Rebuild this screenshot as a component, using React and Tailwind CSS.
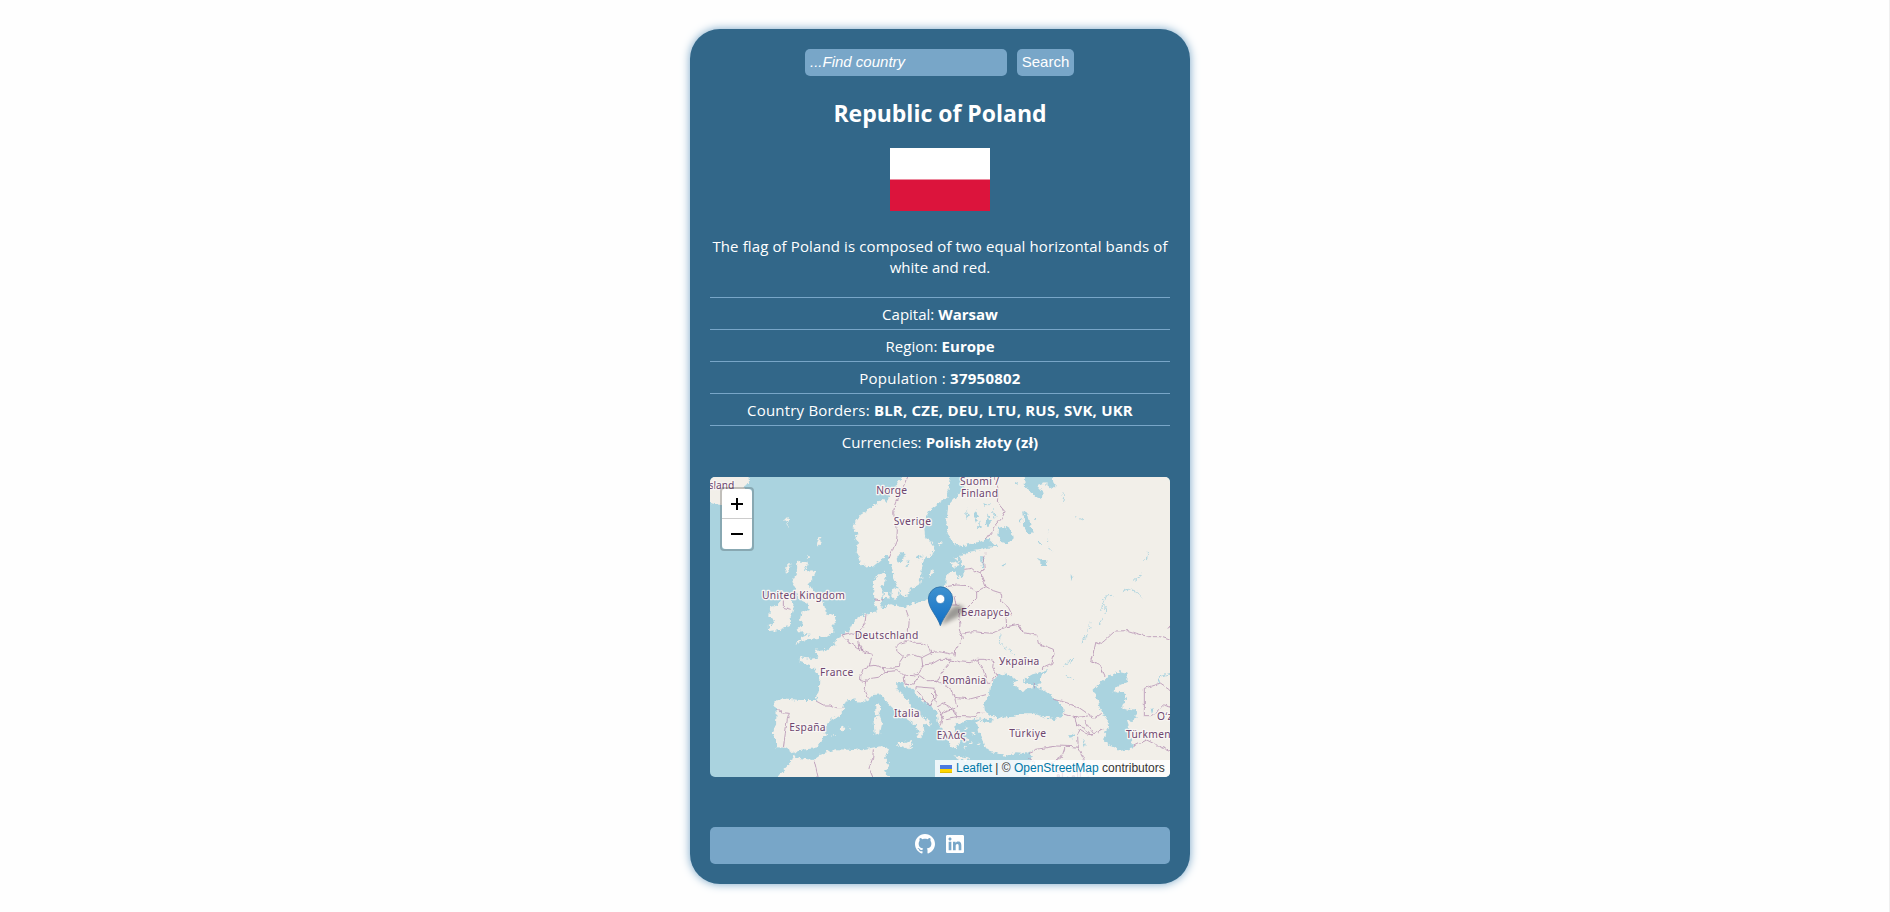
import React from "react";
import { RiGithubFill, RiLinkedinBoxFill } from "react-icons/ri";

const facts = [
  { label: "Capital:", value: "Warsaw", track: "tracking-[0px]" },
  { label: "Region:", value: "Europe", track: "tracking-[0.05px]" },
  { label: "Population :", value: "37950802", track: "tracking-[0.24px]" },
  { label: "Country Borders:", value: "BLR, CZE, DEU, LTU, RUS, SVK, UKR", track: "tracking-[0.21px]" },
  { label: "Currencies:", value: "Polish złoty (zł)", track: "tracking-[0.08px]" },
];

const land = [
  // Iceland
  "M20,10 L145,10 147,40 130,50 138,58 112,70 100,80 85,98 65,105 45,103 20,95Z",
  // Scandinavia
  "M612,10 L600,30 572,70 560,92 545,90 520,106 500,124 482,134 466,154 461,172 472,190 463,205 474,218 470,245 478,275 500,292 518,290 540,272 556,256 566,262 568,280 578,300 580,320 592,345 600,365 608,379 627,376 630,354 655,347 663,320 666,290 672,266 696,254 704,232 690,212 672,200 670,170 678,145 690,120 715,100 738,84 745,60 755,10Z",
  // Continental Europe and western Asia
  "M800,10 L795,50 770,78 746,104 739,150 743,190 755,212 780,230 800,224 840,215 865,205 878,216 890,230 865,233 840,240 800,247 780,258 784,282 794,290 793,318 782,325 765,306 748,305 737,330 735,350 730,378 712,386 690,386 665,394 640,401 615,412 597,410 575,402 562,408 548,416 540,402 546,392 548,368 544,350 557,330 554,305 535,318 519,332 518,350 524,385 528,410 530,428 510,428 490,434 470,446 460,455 450,478 436,490 405,513 402,526 380,540 360,542 350,535 346,543 356,562 335,567 300,562 299,575 325,584 345,600 358,620 357,660 348,690 300,690 245,685 222,698 230,722 228,760 217,792 228,805 228,832 255,833 270,842 283,853 297,840 345,835 362,815 378,795 372,778 392,750 428,732 430,712 437,692 465,688 480,698 505,688 522,672 545,670 558,695 585,720 620,745 645,763 656,785 650,800 660,806 672,790 668,770 675,760 690,770 692,757 660,735 652,722 635,715 622,690 608,675 590,655 588,640 608,636 616,654 624,645 642,665 665,690 695,712 710,725 713,757 722,775 738,800 752,830 768,838 772,820 780,825 775,800 764,785 768,760 790,757 820,748 845,745 830,757 838,785 850,810 858,838 890,848 915,858 945,850 975,852 995,842 990,870 982,930 1420,930 1420,10Z",
  // North Africa
  "M225,930 L245,905 265,885 283,858 300,865 340,870 370,850 410,838 460,840 500,836 545,828 567,838 555,868 570,885 552,905 580,930Z",
  // Great Britain
  "M292,276 L325,273 320,292 314,302 347,306 337,328 322,345 345,362 360,382 372,402 378,430 404,436 407,456 395,470 404,484 380,500 350,505 320,508 286,525 306,502 330,492 306,487 290,482 312,462 300,448 304,428 326,420 322,398 303,390 290,375 286,350 277,335 290,312Z",
  // Ireland
  "M250,380 L275,388 283,408 272,440 273,465 240,480 208,483 203,470 225,455 208,440 210,412 235,405Z",
  "M256,295 L272,280 268,298 258,312Z M256,146 L270,145 262,155 264,178Z M360,200 L362,218 350,230 354,210Z M322,255 L328,262 320,268Z",
  // Danish islands, Gotland, Öland, Estonian islands, Åland
  "M551,368 L566,370 566,386 552,382Z M576,358 L590,352 598,368 588,390 574,378Z M693,298 L702,300 695,318 688,324Z M668,318 L663,345 660,342Z M752,278 L775,274 778,286 758,292Z M760,262 L772,262 770,270Z M712,215 L730,218 718,225Z",
  // Mediterranean islands
  "M590,815 L614,816 637,810 632,828 637,840 615,833 592,824Z M520,745 L540,738 546,762 540,790 524,794Z M526,706 L539,700 541,720 534,739 526,725Z M416,776 L432,770 436,778 424,786Z M444,770 L452,772 448,776Z M394,792 L402,792 398,797Z M760,856 L800,862 812,868 780,870Z",
  // Aegean islands
  "M795,775 L806,772 802,780Z M818,785 L826,788 818,794Z M790,800 L806,806 800,812Z M808,820 L818,816 816,826Z M830,822 L842,820 836,828Z M790,830 L798,832 794,838Z",
];

const water = [
  // White Sea
  "M970,10 L975,50 990,62 1010,82 1026,88 1028,66 1012,48 1035,40 1055,56 1067,45 1055,10Z",
  // Ladoga, Onega and smaller lakes
  "M895,175 L912,168 935,183 938,208 924,223 902,214 892,195Z",
  "M966,124 L985,135 990,160 998,188 985,194 972,170 972,150Z",
  "M843,262 L850,262 852,290 856,295 846,294Z M1014,218 L1026,216 1026,224 1016,225Z M905,281 L918,280 916,288 907,289Z M1012,264 L1040,275 1042,288 1028,288Z M1045,232 L1057,244 1050,240Z",
  "M590,266 L600,250 617,252 608,270 594,278Z M618,288 L626,268 623,292Z M652,258 L668,256 656,268Z",
  "M826,120 L832,135 828,160 822,140Z M850,100 L868,104 852,110Z M862,130 L870,150 866,172 856,160 862,150Z M880,110 L886,140 880,150Z M836,150 L842,170 834,180Z M800,118 L806,140 798,150Z",
  "M1043,178 L1048,180 1044,188Z M1042,205 L1047,214 1041,212Z M1112,312 L1118,322 1113,334Z M950,30 L955,42 948,38Z M958,145 L968,150 960,158Z M1005,140 L1010,148 1004,150Z",
  // Black Sea and Sea of Azov
  "M895,615 L915,611 940,622 952,632 936,640 952,654 970,664 990,653 1003,651 990,642 972,640 973,630 990,615 1045,600 1024,620 1020,640 1008,647 1024,655 1050,675 1075,695 1091,720 1086,740 1060,747 1030,741 1000,730 970,730 940,740 905,743 870,738 855,726 852,700 866,678 870,650 878,634Z",
  "M842,751 L855,746 885,748 870,758 850,758Z",
  // Caspian Sea
  "M1180,660 L1208,632 1235,615 1260,603 1283,608 1282,635 1255,647 1238,662 1250,668 1270,665 1278,685 1266,712 1282,722 1290,716 1305,720 1312,740 1296,754 1280,750 1290,780 1300,835 1265,842 1235,828 1212,812 1216,785 1230,760 1215,740 1200,715 1190,685Z",
  // Van, Urmia, Aral remnants
  "M1102,798 L1122,790 1116,805Z M1145,808 L1157,822 1156,832Z M1352,718 L1362,714 1356,732Z M1372,630 L1382,618 1376,645Z",
];

const rivers = [
  "M1205,425 L1208,400 1216,378 1240,376 M1205,400 L1218,412 1215,430 M1205,445 L1198,465",
  "M1270,362 L1285,358 1310,368 1330,385 M1300,332 L1320,320 1326,308 M1330,272 L1345,262 1345,246",
  "M900,490 L898,520 925,540 945,555 M1092,590 L1118,565 1112,580 M1100,615 L1122,630 M1146,520 L1162,490 1170,455 M1080,70 L1095,75 1090,100 M1125,140 L1150,150 M1380,620 L1410,610",
];

const borders = [
  "M624,15 L612,45 596,75 584,105 581,130 586,152 592,180 590,210 578,240 567,265",
  "M885,15 L895,60 892,98 915,125 905,145 885,170 858,208",
  "M858,248 L850,270 853,295 843,312 858,350 880,362 905,370 905,395 925,412 935,432 918,440 920,470 955,463 965,480 972,490",
  "M793,298 L815,295 828,306 843,312 M738,350 L770,345 805,347 830,366 858,350 M830,366 L830,385 815,400 800,415 780,420 776,445 780,465 778,480 783,490 820,485 875,490 910,475 920,470",
  "M735,405 L778,405 M762,378 L768,405 M783,490 L787,505 768,535 765,560",
  "M955,465 L970,488 1010,495 1015,520 1060,538 1062,555 1055,580 1032,590 1030,600",
  "M755,570 L775,575 810,578 830,568 855,568 880,575 878,595 890,615 870,640 862,640 850,600 830,570",
  "M755,570 L730,600 715,630 695,632 680,632 658,616 M760,670 L765,682 810,687 858,674 M705,630 L740,650 762,668 M765,684 L770,710 758,720 770,740 800,740 825,742 832,728 855,728",
  "M728,725 L750,718 768,725 767,743 740,749 728,738Z M690,672 L708,690 710,712 720,725 728,740 720,770 M710,712 L730,700 745,708 760,718 M730,700 L738,695",
  "M498,432 L495,460 480,480 475,500 478,525 487,545 M425,495 L450,520 478,540 487,545 517,553 508,588 490,595 482,618 482,632 497,635 M425,495 L455,488 475,492",
  "M475,525 L485,525 485,541 476,541Z M497,635 L508,626 535,622 555,605 545,592 525,586 508,588 M497,635 L493,655 505,685",
  "M545,592 L575,595 598,592 600,575 610,560 592,545 588,530 598,520 628,512 650,520 665,520 690,532 695,548 665,563 640,555 610,560",
  "M555,605 L590,602 612,615 640,617 657,612 668,585 665,563 M618,422 L628,450 625,480 628,512 M695,548 L720,545 750,552 765,552 M668,585 L695,582 720,568 755,568",
  "M612,615 L615,640 640,642 657,618 M648,650 L705,655 708,680 696,698 690,708 668,682 648,658Z",
  "M228,720 L240,720 242,728 268,730 262,748 256,790 250,832 M348,693 L370,705 390,705 410,713 430,713",
  "M343,872 L355,925 M520,838 L518,865 507,895 520,925 M522,387 L548,390 M250,388 L250,412 272,418",
  "M1060,688 L1100,698 1140,715 1180,742 M1090,732 L1125,743 1160,738 1185,745 1205,730 M1125,743 L1130,765 1155,775 1175,795 1210,775 M1155,750 L1165,770 1180,790 M1133,795 L1140,778 1160,790 1178,796",
  "M985,848 L1010,838 1070,828 1120,830 1135,832 1133,800 M1135,832 L1150,860 1165,925 M1095,832 L1085,862 1040,890 M985,865 L1000,875 1002,890",
  "M1215,618 L1200,585 1172,572 1180,550 1188,515 1205,520 1245,483 1285,482 1310,490 1345,500 1380,500 1415,512",
  "M1300,830 L1340,810 1380,830 1415,845 M1333,740 L1333,655 1378,640 1415,665 M1333,740 L1355,740 1390,705 1415,712 M1400,475 L1415,465 M1003,638 L1003,655",
];

const places = [
  ["Norge", 529, 71, 92],
  ["Sverige", 581, 165, 112],
  ["Suomi /", 780, 45, 117],
  ["Finland", 783, 81, 111],
  ["United Kingdom", 186, 388, 249],
  ["Беларусь", 783, 437, 146],
  ["Deutschland", 464, 507, 191],
  ["France", 360, 619, 100],
  ["España", 268, 783, 109],
  ["Italia", 582, 741, 77],
  ["Україна", 897, 584, 121],
  ["România", 727, 642, 131],
  ["Ελλάς", 710, 807, 86],
  ["Türkiye", 928, 802, 110],
  ["Türkmen", 1278, 804, 134],
  ["Oʻzb", 1371, 749, 66],
  ["Ísland", 16, 57, 87],
  ["العراق", 1060, 928, 85],
];

function EuropeMap() {
  return (
    <svg viewBox="30 21 1380 900" className="block h-[300px] w-[460px]">
      <defs>
        <filter id="coast" filterUnits="userSpaceOnUse" x="0" y="0" width="1440" height="940">
          <feTurbulence type="fractalNoise" baseFrequency="0.09" numOctaves="3" seed="7" />
          <feDisplacementMap in="SourceGraphic" scale="17" xChannelSelector="R" yChannelSelector="G" />
        </filter>
        <filter id="wobble" filterUnits="userSpaceOnUse" x="0" y="0" width="1440" height="940">
          <feTurbulence type="fractalNoise" baseFrequency="0.06" numOctaves="2" seed="3" />
          <feDisplacementMap in="SourceGraphic" scale="12" xChannelSelector="R" yChannelSelector="G" />
        </filter>
        <filter id="soft" x="-50%" y="-50%" width="200%" height="200%">
          <feGaussianBlur stdDeviation="6" />
        </filter>
        <linearGradient id="pin" x1="0" y1="0" x2="0" y2="1">
          <stop offset="0" stopColor="#3f92cf" />
          <stop offset="1" stopColor="#126fc6" />
        </linearGradient>
      </defs>
      <rect x="30" y="21" width="1380" height="900" fill="#aad3df" />
      <g filter="url(#coast)">
        {land.map((d) => (
          <path key={d} d={d} fill="#f2efe9" />
        ))}
        {water.map((d) => (
          <path key={d} d={d} fill="#aad3df" />
        ))}
        {rivers.map((d) => (
          <path key={d} d={d} fill="none" stroke="#aad3df" strokeWidth="2.6" />
        ))}
      </g>
      <g filter="url(#wobble)">
        {borders.map((d) => (
          <path key={d} d={d} fill="none" stroke="#b48fb2" strokeOpacity="0.85" strokeWidth="2.8" strokeLinejoin="round" />
        ))}
      </g>
      <g
        className="font-['Noto_Sans',sans-serif]"
        fontSize="31"
        fill="#6d466f"
        stroke="#f8f5f3"
        strokeWidth="8"
        strokeLinejoin="round"
        paintOrder="stroke"
      >
        {places.map(([name, x, y, w]) => (
          <text key={name} x={x} y={y} textLength={w}>
            {name}
          </text>
        ))}
      </g>
      <path d="M723,466 C735,436 748,408 775,406 C796,408 796,424 774,440 Z" fill="#000" opacity="0.36" filter="url(#soft)" />
      <path
        d="M721,467 C712,438 685,415 685,387 A36.500,36.500 0 0 1 758,387 C758,415 731,438 721,467Z"
        fill="url(#pin)"
        stroke="#2c6fa5"
        strokeWidth="2.500"
      />
      <circle cx="721" cy="387" r="13.500" fill="#fff" stroke="#2f78b5" strokeWidth="2" />
    </svg>
  );
}

export default function App() {
  return (
    <div className="flex h-[912px] justify-center border-r border-[#efefef] bg-[#fefefe] pt-[29px] pr-[9px] font-['Open_Sans','Noto_Sans',sans-serif] text-[15px] text-white">
      <main className="flex h-[855px] w-[500px] flex-col items-center rounded-[30px] bg-[#326789] p-5 shadow-[0_0_10px_#78a6c8]">
        <form className="flex h-[27px] gap-2.5 pr-px font-['Liberation_Sans',Arial,sans-serif] text-[15px]">
          <input
            placeholder="...Find country"
            className="w-[202px] rounded-[5px] bg-[#78a6c8] px-[5px] placeholder:text-white placeholder:italic placeholder:opacity-100"
          />
          <button type="button" className="w-[57px] rounded-[5px] bg-[#78a6c8]">
            Search
          </button>
        </form>

        <h1 className="mt-[21px] h-8 text-[23px] leading-8 font-bold whitespace-nowrap">Republic of Poland</h1>

        <div className="mt-[19px] flex h-[63px] w-[100px] flex-col">
          <div className="h-[31px] bg-white" />
          <div className="h-px bg-[#ed8a9e]" />
          <div className="h-[31px] bg-[#dc143c]" />
        </div>

        <p className="mt-[25px] text-center leading-[21px] whitespace-nowrap">
          <span className="tracking-[0.12px]">The flag of Poland is composed of two equal horizontal bands of</span>
          <br />
          <span>white and red.</span>
        </p>

        <ul className="mt-[19px] w-full">
          {facts.map((f) => (
            <li key={f.label} className="flex h-8 justify-center border-t border-[#78a6c8] pt-1.5 leading-[21px]">
              <span className={f.track}>
                {f.label} <b>{f.value}</b>
              </span>
            </li>
          ))}
        </ul>

        <section className="relative mt-5 h-[300px] w-[460px] overflow-hidden rounded-[5px]">
          <EuropeMap />
          <div className="absolute top-2.5 left-2.5 flex w-[34px] flex-col rounded border-2 border-black/20 bg-clip-padding">
            <button type="button" aria-label="Zoom in" className="flex h-[30px] items-center justify-center rounded-t-sm border-b border-[#ccc] bg-white">
              <svg viewBox="0 0 12 12" className="h-3 w-3">
                <path d="M6 0v12M0 6h12" stroke="#000" strokeWidth="2" />
              </svg>
            </button>
            <button type="button" aria-label="Zoom out" className="flex h-[30px] items-center justify-center rounded-b-sm bg-white">
              <svg viewBox="0 0 12 12" className="h-3 w-3">
                <path d="M0 6h12" stroke="#000" strokeWidth="2" />
              </svg>
            </button>
          </div>
          <div className="absolute right-0 bottom-0 flex h-[17px] w-[235px] items-center bg-white/80 px-[5px] font-['Liberation_Sans',Arial,sans-serif] text-xs leading-4 whitespace-nowrap text-[#333]">
            <svg viewBox="0 0 12 8" className="mr-1 h-2 w-3">
              <path d="M0 0h12v4H0z" fill="#4C7BE1" />
              <path d="M0 4h12v3H0z" fill="#FFD500" />
              <path d="M0 7h12v1H0z" fill="#E0BC00" />
            </svg>
            <span className="pb-0.5">
              <a className="text-[#0078a8]">Leaflet</a> | © <a className="text-[#0078a8]">OpenStreetMap</a> contributors
            </span>
          </div>
        </section>

        <footer className="mt-[50px] flex h-[37px] w-full justify-center gap-1.5 rounded-[5px] bg-[#78a6c8] pt-[5px]">
          <RiGithubFill size={24} />
          <RiLinkedinBoxFill size={24} />
        </footer>
      </main>
    </div>
  );
}
